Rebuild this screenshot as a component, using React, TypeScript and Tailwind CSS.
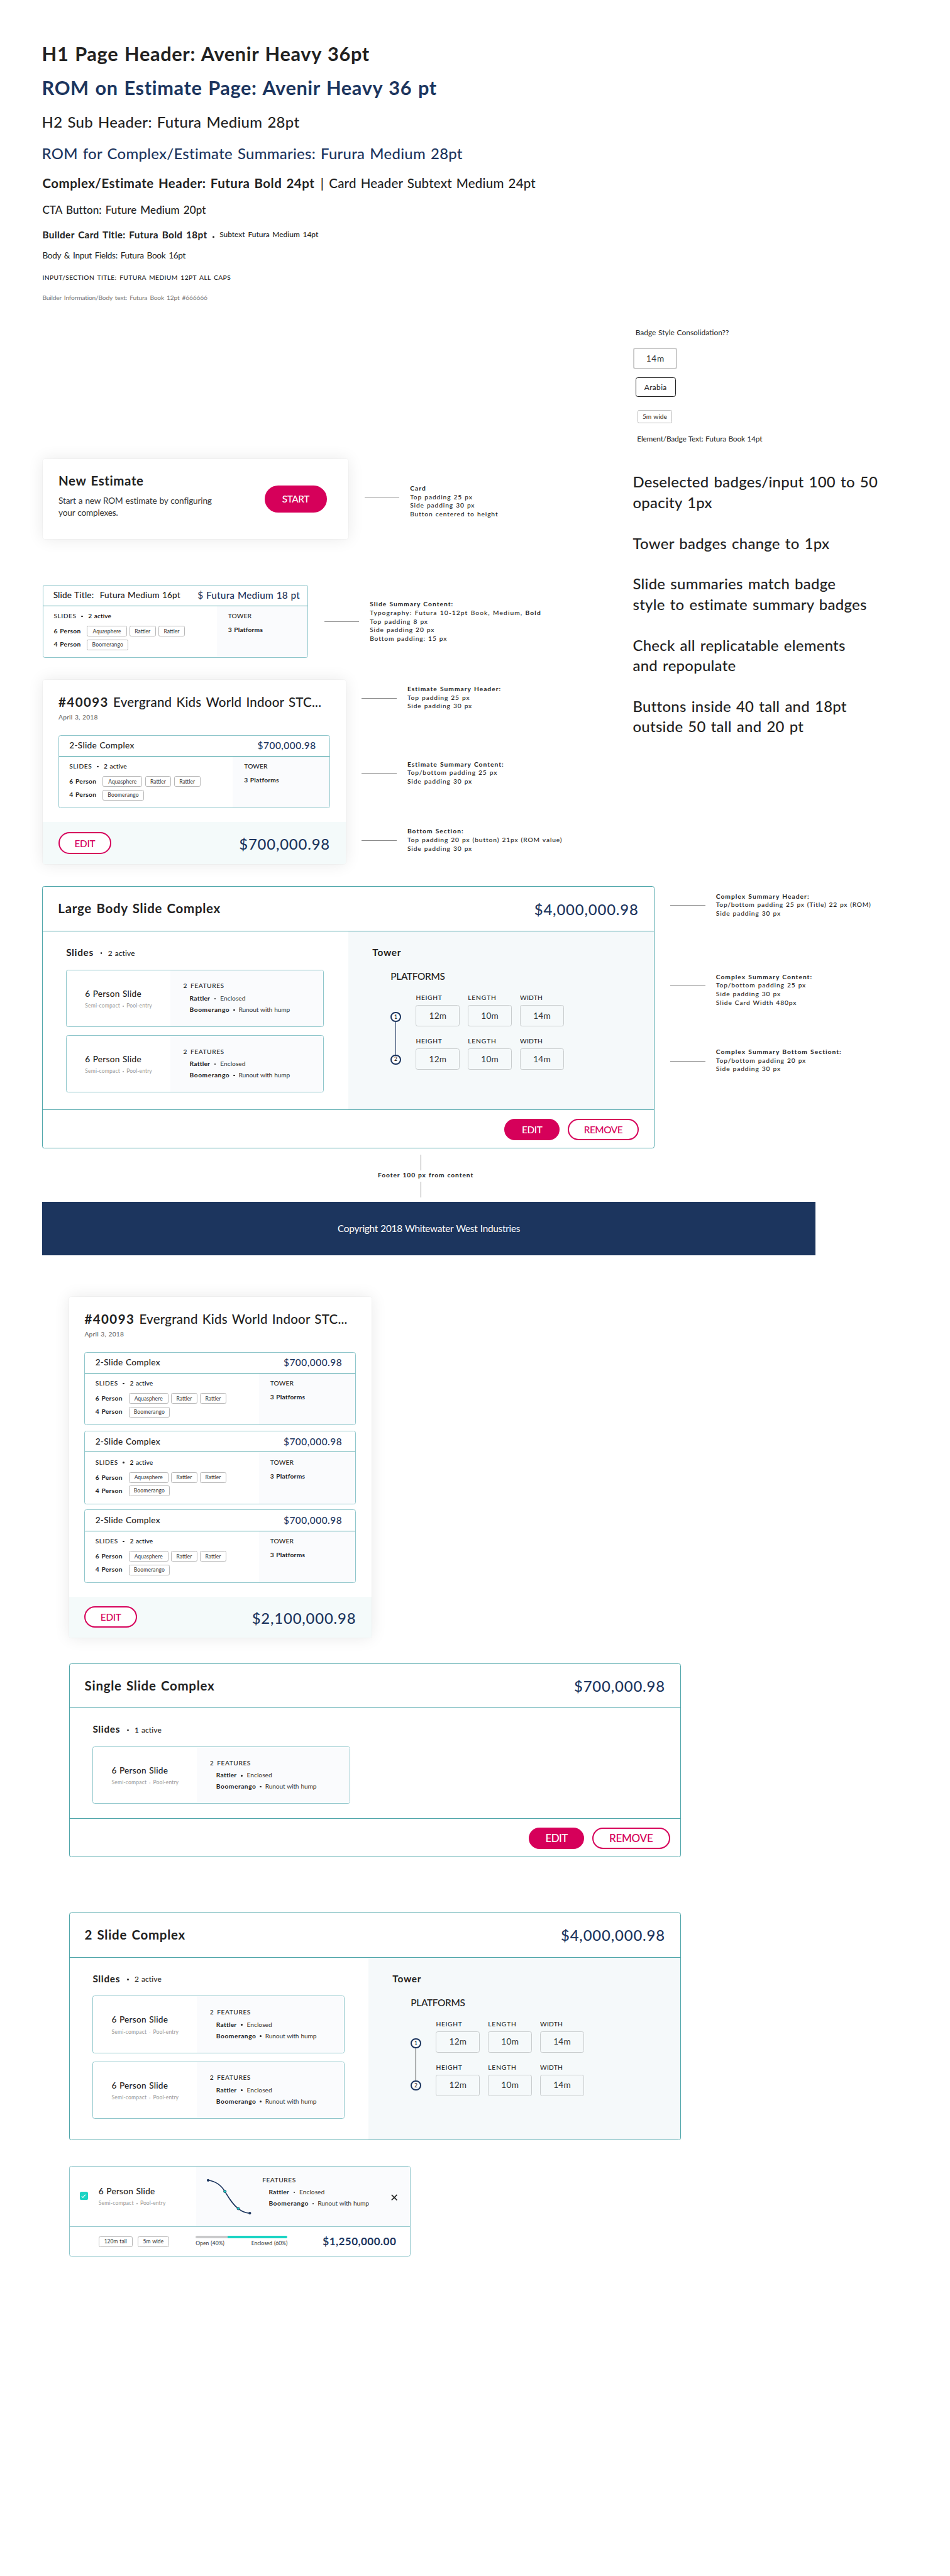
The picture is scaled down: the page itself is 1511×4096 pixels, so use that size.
import type { ReactNode } from 'react';

type Summary = { title: ReactNode; price: string };

function Annotation({ title, lines, lead = 'mt-6', className = '' }: { title: string; lines: ReactNode[]; lead?: string; className?: string }) {
  return (
    <div className={`flex items-start ${className}`}>
      <div className={`ml-[30px] mr-5 h-px w-[65px] bg-[#8a8a8a] ${lead}`} />
      <div className="text-xs font-medium leading-4 tracking-[0.085em] text-[#222]">
        <p className="font-bold tracking-[0.1em]">{title}</p>
        {lines.map((line, i) => (
          <p key={i}>{line}</p>
        ))}
      </div>
    </div>
  );
}

function Dot({ className = 'mx-[8px] size-[3px] bg-[#222]' }: { className?: string }) {
  return <span className={`inline-block shrink-0 rounded-full ${className}`} />;
}

function Tag({ children, className }: { children: ReactNode; className: string }) {
  return (
    <span className={`flex h-5 items-center justify-center rounded-[3px] border border-[#b8b8b8] bg-white text-[10px] leading-[17px] text-[#333] ${className}`}>
      {children}
    </span>
  );
}

function SlideSummary({
  title,
  price,
  className,
  towerWidth,
  headerPad,
}: Summary & { className: string; towerWidth: string; headerPad: string }) {
  return (
    <div className={`flex h-[137px] flex-col overflow-hidden rounded-[4px] border border-[#8fc6cb] bg-white ${className}`}>
      <div className={`flex h-[39px] shrink-0 items-center justify-between border-b border-[#4fa6aa] ${headerPad}`}>
        <div className="text-base font-medium leading-5 tracking-[0.022em] text-[#222]">{title}</div>
        <div className="text-lg font-medium leading-[22px] tracking-[0.034em] text-[#1c355e]">{price}</div>
      </div>
      <div className="flex flex-1 text-xs leading-4 text-[#222]">
        <div className="flex-1 pl-[19px] pt-[11px]">
          <div className="flex items-center font-medium">
            <span className="tracking-[0.05em]">SLIDES</span>
            <Dot className="ml-[9px] mr-[10px] size-[3px] bg-[#222]" />
            <span className="tracking-[0.01em] text-black">2 active</span>
          </div>
          <div className="mt-[10px] flex items-center">
            <span className="w-[62px] font-bold tracking-[0.03em]">6 Person</span>
            <div className="flex gap-[5px]">
              <Tag className="w-[74px] tracking-[0.006em]">Aquasphere</Tag>
              <Tag className="w-[49px]">Rattler</Tag>
              <Tag className="w-[49px]">Rattler</Tag>
            </div>
          </div>
          <div className="mt-[5px] flex items-center">
            <span className="w-[62px] font-bold tracking-[0.03em]">4 Person</span>
            <Tag className="w-[77px] tracking-[0.018em]">Boomerango</Tag>
          </div>
        </div>
        <div className={`bg-[#fafbfd] pl-[21px] pt-[11px] ${towerWidth}`}>
          <p className="font-medium tracking-[0.01em]">TOWER</p>
          <p className="mt-[10px] font-bold tracking-[0.02em]">3 Platforms</p>
        </div>
      </div>
    </div>
  );
}

function PillButton({ children, filled, className }: { children: ReactNode; filled?: boolean; className: string }) {
  return (
    <button
      className={`flex items-center justify-center rounded-full border-[2.4px] border-[#d6005a] pt-px font-medium ${
        filled ? 'bg-[#d6005a] text-white' : 'bg-white text-[#d6005a]'
      } ${className}`}
    >
      {children}
    </button>
  );
}

function EstimateCard({ count, total, footerHeight }: { count: number; total: string; footerHeight: string }) {
  return (
    <div className="w-[564px] shrink-0 overflow-hidden rounded-[4px] bg-white shadow-[0_0_30px_rgba(0,0,0,0.09)] ring-1 ring-black/[0.03]">
      <div className="px-[29px] pb-[25px] pt-[26px]">
        <div className="flex text-2xl leading-[30px] text-[#222]">
          <span className="w-[102px] font-bold tracking-[0.07em]">#40093</span>
          <span className="font-medium tracking-[0.012em] [word-spacing:2px]">Evergrand Kids World Indoor STC...</span>
        </div>
        <p className="mt-[5px] text-xs font-medium leading-4 tracking-[0.02em] text-[#666]">April 3, 2018</p>
        <div className="mt-[25px] flex flex-col gap-[10px]">
          {Array.from({ length: count }, (_, i) => (
            <SlideSummary
              key={i}
              title="2-Slide Complex"
              price="$700,000.98"
              className="w-full"
              towerWidth="w-[180px]"
              headerPad="pl-[19px] pr-[25px]"
            />
          ))}
        </div>
      </div>
      <div className={`flex items-center justify-between bg-[#f4fafa] pl-[29px] pr-[29px] ${footerHeight}`}>
        <PillButton className="h-10 w-[98px] text-lg leading-[22px] tracking-[-0.02em]">EDIT</PillButton>
        <span className="mt-[2px] text-[28px] font-medium leading-[34px] tracking-[0.034em] text-[#1c355e]">{total}</span>
      </div>
    </div>
  );
}

function Features({ title, className }: { title: string; className: string }) {
  return (
    <div className={`text-xs leading-4 text-[#222] ${className}`}>
      <p className="font-medium tracking-[0.05em] [word-spacing:2.5px]">{title}</p>
      <div className="mt-[7px] flex items-center pl-3">
        <span className="font-bold tracking-[0.02em]">Rattler</span>
        <Dot />
        <span className="text-[#333]">Enclosed</span>
      </div>
      <div className="mt-[5px] flex items-center pl-3">
        <span className="font-bold tracking-[0.05em]">Boomerango</span>
        <Dot className="mx-[7px] size-[3px] bg-[#222]" />
        <span className="tracking-[-0.02em] text-[#333]">Runout with hump</span>
      </div>
    </div>
  );
}

function SlideName() {
  return (
    <>
      <p className="text-base font-medium leading-5 tracking-[0.018em] text-[#222]">6 Person Slide</p>
      <div className="mt-[6px] flex items-center text-[10px] leading-[14px] text-[#999]">
        <span className="tracking-[0.026em]">Semi-compact</span>
        <Dot className="mx-[5px] size-[2px] bg-[#999]" />
        <span className="tracking-[0.013em]">Pool-entry</span>
      </div>
    </>
  );
}

function SlideCard() {
  return (
    <div className="flex h-[107px] overflow-hidden rounded-[4px] border border-[#8fc6cb] bg-white">
      <div className="w-[193px] shrink-0 pl-[34px] pt-[34px]">
        <SlideName />
      </div>
      <Features title="2 FEATURES" className="flex-1 bg-[#fafbfd] pl-6 pt-[22px]" />
    </div>
  );
}

function StepMark({ children }: { children: ReactNode }) {
  return (
    <span className="flex size-[19px] items-center justify-center rounded-full border-[2.4px] border-[#1c355e] bg-white text-[10px] font-medium leading-none text-[#222]">
      {children}
    </span>
  );
}

const dimensions = [
  { label: 'HEIGHT', value: '12m', tracking: 'tracking-[0.065em]' },
  { label: 'LENGTH', value: '10m', tracking: 'tracking-[0.085em]' },
  { label: 'WIDTH', value: '14m', tracking: 'tracking-[0.025em]' },
];

function TowerPanel({ width, link }: { width: string; link: string }) {
  return (
    <div className={`shrink-0 bg-[#f5f9fa] pl-[45px] pt-7 text-[#222] ${width}`}>
      <p className="text-lg font-bold leading-[22px] tracking-[0.05em]">Tower</p>
      <div className="pl-[34px]">
        <p className="mt-[23px] text-lg font-medium leading-[22px] tracking-[-0.02em]">PLATFORMS</p>
        <div className="mt-[21px] flex">
          <div className="flex w-[47px] flex-col items-start pt-[34px]">
            <StepMark>1</StepMark>
            <span className={`ml-[9px] h-[60px] w-px ${link}`} />
            <StepMark>2</StepMark>
          </div>
          <div className="flex flex-col gap-5">
            {[0, 1].map((row) => (
              <div key={row} className="flex gap-[15px]">
                {dimensions.map((d) => (
                  <div key={d.label} className="w-[82px]">
                    <p className={`text-xs font-medium leading-4 ${d.tracking}`}>{d.label}</p>
                    <div className="mt-[5px] flex h-10 items-center justify-center rounded-[4px] border border-[#c9cdce] text-base leading-5 tracking-[0.017em] text-[#333]">
                      {d.value}
                    </div>
                  </div>
                ))}
              </div>
            ))}
          </div>
        </div>
      </div>
    </div>
  );
}

function ComplexCard({
  title,
  price,
  active,
  slides,
  bodyHeight,
  slideWidth,
  tower,
  actions,
}: Summary & { active: number; slides: number; bodyHeight: string; slideWidth: string; tower?: ReactNode; actions?: ReactNode }) {
  return (
    <div className="w-[1140px] shrink-0 overflow-hidden rounded-[4px] border border-[#4fa6aa] bg-white">
      <div className="flex h-[83px] items-center justify-between border-b border-[#4fa6aa] pl-[28px] pr-[28px]">
        <h2 className="text-2xl font-bold leading-[30px] tracking-[0.035em] text-[#222] [word-spacing:2px]">{title}</h2>
        <span className="text-[28px] font-medium leading-[34px] tracking-[0.035em] text-[#1c355e]">{price}</span>
      </div>
      <div className={`flex ${bodyHeight}`}>
        <div className="flex-1 pl-[43px] pt-7">
          <div className="flex items-center text-[#222]">
            <span className="text-lg font-bold leading-[22px] tracking-[0.043em]">Slides</span>
            <Dot className="ml-[13px] mr-[11px] mt-[3px] size-[3px] bg-[#222]" />
            <span className="mt-[2px] text-sm font-medium leading-5 tracking-[0.01em]">{active} active</span>
          </div>
          <div className={`mt-[21px] flex flex-col gap-[15px] ${slideWidth}`}>
            {Array.from({ length: slides }, (_, i) => (
              <SlideCard key={i} />
            ))}
          </div>
        </div>
        {tower}
      </div>
      {actions}
    </div>
  );
}

function SlideProfile() {
  return (
    <svg className="h-[111px] w-[123px] shrink-0" viewBox="0 0 123 111" fill="none">
      <path
        d="M22.3 25.5C37 27.5 46.5 34.5 53.5 46.3C61 58.5 68 70.5 78.5 78.3C85 83.7 91.5 86.3 100 86.8"
        stroke="#1c355e"
        strokeWidth="1.9"
      />
      <circle cx="22.3" cy="25.5" r="2.5" fill="#1c355e" />
      <circle cx="100" cy="86.8" r="2.5" fill="#1c355e" />
      <circle cx="53.5" cy="46.3" r="2.5" fill="#1bd4c4" stroke="#1c355e" strokeWidth="0.9" />
      <circle cx="78.5" cy="78.3" r="2.5" fill="#1bd4c4" stroke="#1c355e" strokeWidth="0.9" />
    </svg>
  );
}

function BuilderCard() {
  return (
    <div className="flex h-[169px] w-[636px] flex-col overflow-hidden rounded-[4px] border border-[#8fc6cb] bg-white">
      <div className="flex h-[112px] shrink-0 border-b border-[#8fc6cb]">
        <div className="flex w-[236px] shrink-0">
          <span className="ml-[19px] mt-[47px] flex size-[15px] items-center justify-center rounded-[3px] bg-[#1bd4c4]">
            <svg className="size-[9px]" viewBox="0 0 9 9" fill="none">
              <path d="M1 4.8L3.3 7.2L8 1.8" stroke="#fff" strokeWidth="1.3" />
            </svg>
          </span>
          <div className="ml-5 pt-9">
            <SlideName />
          </div>
        </div>
        <div className="flex flex-1 bg-[#fafbfd]">
          <SlideProfile />
          <Features title="FEATURES" className="pt-[17px]" />
          <svg className="ml-auto mr-[23px] mt-[51px] size-3" viewBox="0 0 12 12" fill="none">
            <path d="M1 1L11 11M11 1L1 11" stroke="#222" strokeWidth="1.8" />
          </svg>
        </div>
      </div>
      <div className="flex flex-1 items-center pl-[54px] pr-[25px]">
        <Tag className="w-[63px]">120m tall</Tag>
        <Tag className="ml-[10px] w-[58px]">5m wide</Tag>
        <div className="ml-[50px] w-[171px] text-[10px] leading-[14px] text-[#333]">
          <div className="flex h-[5px] overflow-hidden rounded-full">
            <span className="w-[59px] bg-[#c9cacb]" />
            <span className="flex-1 bg-[#1bd4c4]" />
          </div>
          <div className="mt-[3px] flex justify-between">
            <span className="tracking-[0.01em]">Open (40%)</span>
            <span>Enclosed (60%)</span>
          </div>
        </div>
        <span className="ml-auto text-xl font-bold leading-6 tracking-[0.027em] text-[#1c355e]">$1,250,000.00</span>
      </div>
    </div>
  );
}

function TypeScale() {
  return (
    <section className="pl-20 pt-[78px] text-[#222] [word-spacing:2px]">
      <h1 className="-ml-[2px] text-4xl font-bold leading-[44px] tracking-[0.021em]">H1 Page Header: Avenir Heavy 36pt</h1>
      <p className="-ml-[2px] mt-5 text-4xl font-bold leading-[44px] tracking-[0.02em] text-[#1c355e]">ROM on Estimate Page: Avenir Heavy 36 pt</p>
      <p className="-ml-[2px] mt-6 text-[28px] font-medium leading-[34px] tracking-[0.014em]">H2 Sub Header: Futura Medium 28pt</p>
      <p className="-ml-[2px] mt-6 text-[28px] font-medium leading-[34px] tracking-[0.012em] text-[#1c355e]">
        ROM for Complex/Estimate Summaries: Furura Medium 28pt
      </p>
      <div className="-ml-px mt-[25px] flex text-2xl leading-[30px]">
        <span className="w-[518px] font-bold tracking-[0.0245em]">Complex/Estimate Header: Futura Bold 24pt</span>
        <span className="w-[16px] font-medium">|</span>
        <span className="font-medium tracking-[0.01em]">Card Header Subtext Medium 24pt</span>
      </div>
      <p className="-ml-px mt-[22px] text-xl font-medium leading-6 tracking-[0.003em]">CTA Button: Future Medium 20pt</p>
      <div className="-ml-px mt-[23px] flex h-[22px] items-baseline">
        <span className="text-lg font-bold leading-[22px] tracking-[0.021em]">Builder Card Title: Futura Bold 18pt</span>
        <Dot className="ml-[10px] mr-[10px] size-[3px] -translate-y-px bg-[#222]" />
        <span className="-translate-y-[2px] text-sm font-medium leading-[18px]">Subtext Futura Medium 14pt</span>
      </div>
      <p className="-ml-px mt-[18px] text-base leading-5 tracking-[-0.024em]">Body &amp; Input Fields: Futura Book 16pt</p>
      <p className="-ml-px mt-[24px] text-xs font-medium leading-4 tracking-[0.037em]">INPUT/SECTION TITLE: FUTURA MEDIUM 12PT ALL CAPS</p>
      <p className="-ml-px mt-[21px] text-xs leading-4 tracking-[-0.02em] text-[#777]">Builder Information/Body text: Futura Book 12pt #666666</p>
    </section>
  );
}

const notes = [
  ['Deselected badges/input 100 to 50', 'opacity 1px'],
  ['Tower badges change to 1px'],
  ['Slide summaries match badge', 'style to estimate summary badges'],
  ['Check all replicatable elements', 'and repopulate'],
  ['Buttons inside 40 tall and 18pt', 'outside 50 tall and 20 pt'],
];

function BadgeNotes() {
  return (
    <aside className="w-[500px] pt-[47px] text-sm leading-[18px] text-[#222]">
      <p className="ml-1">Badge Style Consolidation??</p>
      <div className="mt-5 flex h-10 w-[82px] items-center justify-center rounded-[4px] border-[2.4px] border-[#ccc] text-base leading-5 tracking-[0.05em] text-[#333]">14m</div>
      <div className="ml-1 mt-[15px] flex h-9 w-[75px] items-center justify-center rounded-[4px] border border-[#222] tracking-[0.03em]">Arabia</div>
      <div className="ml-2 mt-[25px] flex h-[25px] w-[64px] items-center justify-center rounded-[3px] border border-[#bbb] text-xs leading-4">5m wide</div>
      <p className="ml-[7px] mt-[20px] tracking-[-0.018em]">Element/Badge Text: Futura Book 14pt</p>
      <div className="-ml-px mt-[52px] flex flex-col gap-[38px] text-[28px] font-medium leading-[38px] tracking-[0.012em] [word-spacing:2px]">
        {notes.map((lines) => (
          <p key={lines[0]}>
            {lines.map((line) => (
              <span key={line} className="block">
                {line}
              </span>
            ))}
          </p>
        ))}
      </div>
    </aside>
  );
}

export default function App() {
  return (
    <main className="h-[4797px] w-[1770px] overflow-hidden whitespace-nowrap bg-white font-['Lato',sans-serif] [word-spacing:0.8px] [zoom:0.85367]">
      <TypeScale />

      <div className="flex pl-20">
        <div className="w-[1100px] pt-[292px]">
          <div className="flex items-start">
            <div className="flex h-[149px] w-[569px] items-center justify-between rounded-[4px] bg-white pl-[29px] pr-[40px] shadow-[0_0_30px_rgba(0,0,0,0.09)] ring-1 ring-black/[0.03]">
              <div className="self-start pt-[26px] text-[#222]">
                <h2 className="text-2xl font-bold leading-[30px] tracking-[0.03em] [word-spacing:2px]">New Estimate</h2>
                <p className="mt-[11px] text-base leading-[22px] tracking-[-0.0125em] text-[#333]">
                  Start a new ROM estimate by configuring
                  <br />
                  your complexes.
                </p>
              </div>
              <PillButton filled className="h-[50px] w-[116px] text-lg leading-[22px] tracking-[-0.03em]">
                START
              </PillButton>
            </div>
            <Annotation className="mt-[47px]" title="Card" lines={['Top padding 25 px', 'Side padding 30 px', 'Button centered to height']} />
          </div>

          <div className="mt-[85px] flex items-start">
            <SlideSummary
              title={
                <>
                  Slide Title:<span className="ml-[11px]">Futura Medium 16pt</span>
                </>
              }
              price="$ Futura Medium 18 pt"
              className="w-[494px]"
              towerWidth="w-[169px]"
              headerPad="pl-[18px] pr-[14px] [&>div]:tracking-[0.012em]"
            />
            <Annotation
              className="mt-[29px]"
              lead="mt-10"
              title="Slide Summary Content:"
              lines={[
                <span className="tracking-[0.105em]">
                  Typography: Futura 10-12pt <span className="font-normal">Book</span>, Medium, <span className="font-bold">Bold</span>
                </span>,
                'Top padding 8 px',
                'Side padding 20 px',
                'Bottom padding: 15 px',
              ]}
            />
          </div>

          <div className="mt-[41px] flex items-start">
            <EstimateCard count={1} total="$700,000.98" footerHeight="h-[79px]" />
            <div>
              <Annotation className="mt-[9px]" title="Estimate Summary Header:" lines={['Top padding 25 px', 'Side padding 30 px']} />
              <Annotation className="mt-[92px]" title="Estimate Summary Content:" lines={['Top/bottom padding 25 px', 'Side padding 30 px']} />
              <Annotation className="mt-[77px]" title="Bottom Section:" lines={['Top padding 20 px (button) 21px (ROM value)', 'Side padding 30 px']} />
            </div>
          </div>
        </div>
        <BadgeNotes />
      </div>

      <div className="mt-[41px] flex items-start pl-[79px]">
        <ComplexCard
          title="Large Body Slide Complex"
          price="$4,000,000.98"
          active={2}
          slides={2}
          bodyHeight="h-[332px]"
          slideWidth="w-[480px]"
          tower={<TowerPanel width="w-[569px]" link="bg-[#1c355e]" />}
          actions={
            <div className="flex h-[71px] items-start justify-end gap-[15px] border-t border-[#4fa6aa] pr-[28px] pt-4">
              <PillButton filled className="h-10 w-[103px] text-lg leading-[22px] tracking-[-0.02em]">EDIT</PillButton>
              <PillButton className="h-10 w-[132px] text-lg leading-[22px] tracking-[-0.03em]">REMOVE</PillButton>
            </div>
          }
        />
        <div>
          <Annotation className="mt-[11px]" title="Complex Summary Header:" lines={[<span className="tracking-[0.075em]">Top/bottom padding 25 px (Title) 22 px (ROM)</span>, 'Side padding 30 px']} />
          <Annotation
            className="mt-[102px]"
            title="Complex Summary Content:"
            lines={['Top/bottom padding 25 px', 'Side padding 30 px', 'Slide Card Width 480px']}
          />
          <Annotation className="mt-[76px]" title="Complex Summary Bottom Sectiont:" lines={['Top/bottom padding 20 px', 'Side padding 30 px']} />
        </div>
      </div>

      <div className="mt-[12px] flex flex-col pl-[704px]">
        <span className="ml-20 h-[29px] w-px bg-[#8a8a8a]" />
        <span className="mt-px text-xs font-bold leading-4 tracking-[0.09em] text-[#222]">Footer 100 px from content</span>
        <span className="ml-20 mt-1 h-[29px] w-px bg-[#8a8a8a]" />
      </div>
      <footer className="ml-[79px] mt-2 flex h-[100px] w-[1440px] items-center justify-center bg-[#1c355e] text-lg leading-[22px] tracking-[-0.018em] text-white">
        Copyright 2018 Whitewater West Industries
      </footer>

      <div className="pl-[128.5px]">
        <div className="mt-[78px]">
          <EstimateCard count={3} total="$2,100,000.98" footerHeight="h-[76px]" />
        </div>
        <div className="mt-[48px]">
          <ComplexCard
            title="Single Slide Complex"
            price="$700,000.98"
            active={1}
            slides={1}
            bodyHeight="h-[205px]"
            slideWidth="w-[480px]"
            actions={
              <div className="flex h-[71px] items-start justify-end gap-[15px] border-t border-[#4fa6aa] pr-[19px] pt-4">
                <PillButton filled className="h-10 w-[103px] text-xl leading-6 tracking-[-0.035em]">EDIT</PillButton>
                <PillButton className="h-10 w-[145px] text-xl leading-6 tracking-[-0.02em]">REMOVE</PillButton>
              </div>
            }
          />
        </div>
        <div className="mt-[103px]">
          <ComplexCard
            title="2 Slide Complex"
            price="$4,000,000.98"
            active={2}
            slides={2}
            bodyHeight="h-[339px]"
            slideWidth="w-[469px]"
            tower={<TowerPanel width="w-[581px]" link="bg-[#222]" />}
          />
        </div>
        <div className="mt-[48px]">
          <BuilderCard />
        </div>
      </div>
    </main>
  );
}
